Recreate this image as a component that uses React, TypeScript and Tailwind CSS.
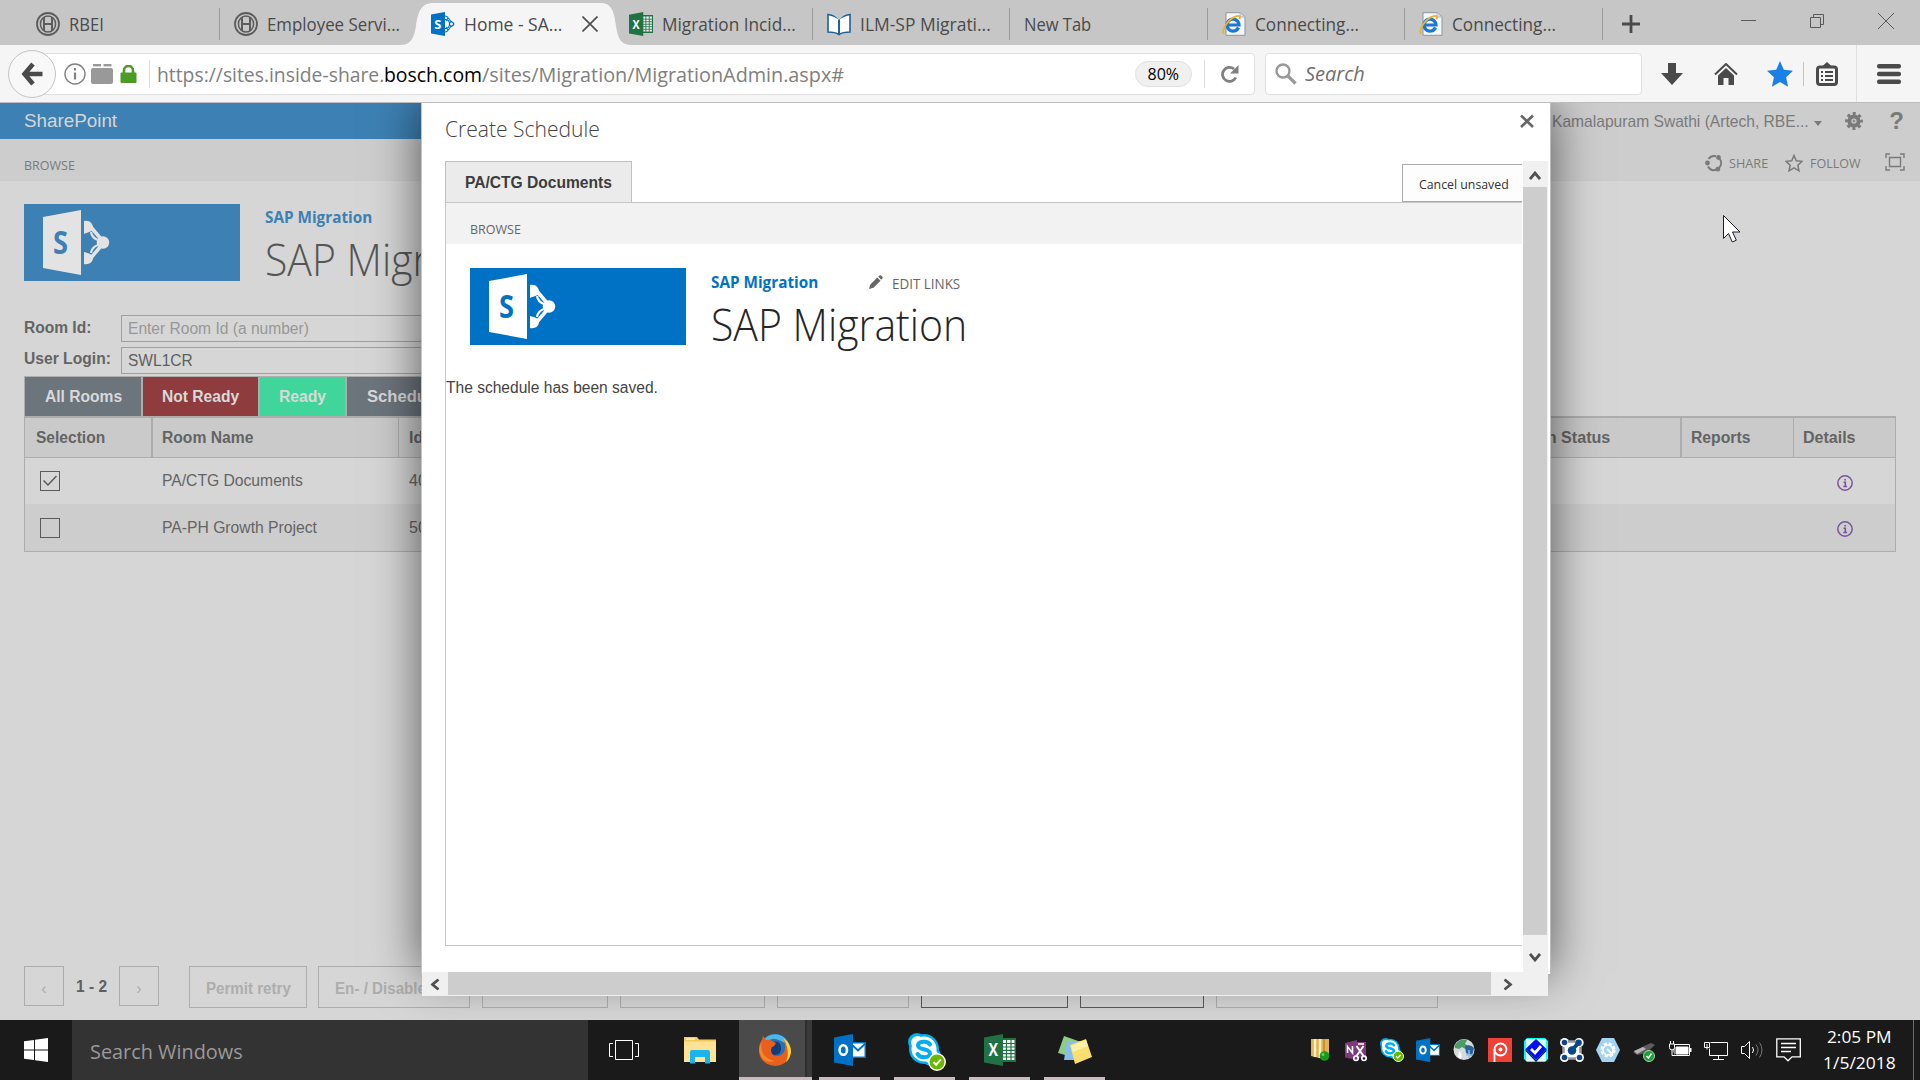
import React, { useLayoutEffect, useRef, useState } from "react";

/* Text run squeezed or stretched horizontally to a given width. */
function Fit({ w, className = "", children }: { w: number; className?: string; children: React.ReactNode }) {
  const ref = useRef<HTMLSpanElement>(null);
  const [k, setK] = useState(1);
  useLayoutEffect(() => {
    if (ref.current && ref.current.offsetWidth) setK(w / ref.current.offsetWidth);
  }, [w]);
  return (
    <span className={"block shrink-0 whitespace-pre " + className} style={{ width: w }}>
      <span ref={ref} className="inline-block origin-left" style={{ transform: `scaleX(${k})` }}>
        {children}
      </span>
    </span>
  );
}

const UI = "font-['Open_Sans','Noto_Sans',sans-serif]";
const ARIAL = "font-['Liberation_Sans',sans-serif]";

function Bosch() {
  return (
    <svg viewBox="0 0 24 24" className="h-6 w-6 shrink-0" fill="none" stroke="#5c5c5c">
      <circle cx="12" cy="12" r="11" strokeWidth="1.8" />
      <ellipse cx="12" cy="12" rx="7.6" ry="8" strokeWidth="1.5" />
      <path d="M8 5v14M16 5v14M8 12h8" strokeWidth="2" />
    </svg>
  );
}
function SharePointTab() {
  return (
    <svg viewBox="0 0 24 24" className="h-6 w-6 shrink-0">
      <g fill="none" stroke="#0072c6" strokeWidth="1.1">
        <path d="M14 4c3 0 3.500 2.500 5.500 5l3.500 3-3.500 3c-2 2.500-2.500 5-5.500 5M14 7.500c3 0 4.500 2 4.500 4.500s-1.500 4.500-4.500 4.500M17 6l-2 3M17 18l-2-3" />
        <circle cx="20.500" cy="12" r="2" fill="#f5f5f5" />
      </g>
      <path d="M0 2.500 14 0v24L0 21.500z" fill="#0072c6" />
      <text x="3.200" y="17" fontSize="13" fontWeight="700" fill="#fff" fontFamily="Open Sans">S</text>
    </svg>
  );
}
function Excel({ className }: { className: string }) {
  return (
    <svg viewBox="0 0 32 32" className={className}>
      <path d="M18 4h14v24H18z" fill="#207245" />
      <path d="M19 6h11.500v20H19z" fill="#fff" />
      <path d="M19 9.500h12M19 13h12M19 16.300h12M19 19.600h12M19 23h12M22.500 5v22M27 5v22" stroke="#207245" strokeWidth="1.200" />
      <path d="M0 3.500 19 0v32L0 28.500z" fill="#207245" />
      <text x="4.500" y="22" fontSize="17" fontWeight="700" fill="#fff" fontFamily="Open Sans" textLength="9.500" lengthAdjust="spacingAndGlyphs">X</text>
    </svg>
  );
}
function Outlook({ className }: { className: string }) {
  return (
    <svg viewBox="0 0 32 32" className={className}>
      <path d="M17 8h15v16H17z" fill="#0072c6" />
      <path d="M18 9.500h12.500v13H18z" fill="#fff" />
      <path d="m17 10 7 6.500 8-7.500" fill="none" stroke="#0072c6" strokeWidth="2" />
      <path d="M0 3.500 19 0v32L0 28.500z" fill="#0072c6" />
      <ellipse cx="9.300" cy="16" rx="3.700" ry="4.800" fill="none" stroke="#fff" strokeWidth="2.600" />
    </svg>
  );
}
function Book() {
  return (
    <svg viewBox="0 0 24 24" className="h-6 w-6 shrink-0">
      <path d="M1 2.500c5 1 8 2 11 4.500 3-2.500 6-3.500 11-4.500v17.500c-5 0-8 .5-11 2.500-3-2-6-2.500-11-2.500z" fill="#fff" stroke="#1f6091" strokeWidth="1.600" />
      <path d="M12 7v15" fill="none" stroke="#1f6091" strokeWidth="2" />
      <path d="M6 1 12 7l6-6" fill="none" stroke="#b9d0e2" strokeWidth="1.300" />
    </svg>
  );
}
function IE() {
  return (
    <svg viewBox="0 0 24 24" className="h-6 w-6 shrink-0">
      <path d="M4 .7h14l5 4v18.600H4z" fill="#f4f6f8" stroke="#8f959b" />
      <path d="M18 .7v4.300h5" fill="#d7dce0" stroke="#a8adb3" strokeWidth=".7" />
      <path d="M16.500 15.500a6 6 0 1 1 .5-2.500H6.500" fill="none" stroke="#1c77d2" strokeWidth="3.200" />
      <path d="M2 22C-1 18 6 7 14 4.300c4-1.300 4.500.7 3.300 3" fill="none" stroke="#eab22e" strokeWidth="1.900" />
    </svg>
  );
}

const tabs = [
  { icon: <Bosch />, label: "RBEI", w: 35, box: "w-[220px] pl-9 border-r" },
  { icon: <Bosch />, label: "Employee Servi...", w: 133, box: "w-[196px] pl-[14px]" },
  { icon: <SharePointTab />, label: "Home - SA...", w: 98, box: "w-[200px] pl-[15px]", active: true },
  { icon: <Excel className="h-6 w-6 shrink-0" />, label: "Migration Incid...", w: 134, box: "w-[197px] pl-[13px] border-r" },
  { icon: <Book />, label: "ILM-SP Migrati...", w: 131, box: "w-[197px] pl-[14px] border-r" },
  { icon: null, label: "New Tab", w: 67, box: "w-[198px] pl-[14px] border-r" },
  { icon: <IE />, label: "Connecting...", w: 104, box: "w-[197px] pl-[14px] border-r" },
  { icon: <IE />, label: "Connecting...", w: 104, box: "w-[198px] pl-[14px] border-r" },
];

function TabStrip() {
  return (
    <div className={"relative flex h-[45px] bg-[#c6c6c6] pt-2 text-[18px] text-[#4a4a4a] " + UI}>
      <svg viewBox="0 0 240 42" className="absolute left-[400px] top-[3px] h-[42px] w-[240px]">
        <path d="M0 42C11 42 14 35 16 23 18 7 22 0 34 0H200C211 0 214 7 216 23 218 36 221 42 232 42z" fill="#f5f5f5" />
      </svg>
      {tabs.map((t, i) => (
        <div key={i} className={"relative flex h-8 shrink-0 items-center gap-[9px] border-[#9b9b9b] " + t.box}>
          {t.icon}
          <Fit w={t.w} className="leading-8">{t.label}</Fit>
          {t.active && (
            <svg viewBox="0 0 16 16" className="ml-[11px] h-4 w-4" stroke="#4d4d4d" strokeWidth="1.600">
              <path d="m.5.500 15 15m0-15-15 15" />
            </svg>
          )}
        </div>
      ))}
      <svg viewBox="0 0 18 18" className="ml-[19px] mt-[7px] h-[18px] w-[18px]" stroke="#4a4a4a" strokeWidth="2.800">
        <path d="M9 0v18M0 9h18" />
      </svg>
      <div className="ml-auto mr-[26px] mt-[5px] flex h-4 items-center gap-[53px]">
        <svg viewBox="0 0 16 16" className="h-4 w-4" stroke="#5a5a5a"><path d="M1 7.500h15" /></svg>
        <svg viewBox="0 0 16 16" className="h-4 w-4" fill="none" stroke="#5a5a5a"><path d="M1.500 4.500h10v10h-10zM4.500 4V1.500h10v10H12" /></svg>
        <svg viewBox="0 0 16 16" className="h-4 w-4" stroke="#5a5a5a"><path d="m0 0 16 16M16 0 0 16" /></svg>
      </div>
    </div>
  );
}

function Toolbar() {
  return (
    <div className={"flex h-[58px] items-center border-b border-[#bdbdbd] bg-[#f5f5f5] " + UI}>
      <div className="relative z-10 ml-2 flex h-12 w-12 shrink-0 items-center justify-center rounded-full border border-[#c4c4c4] bg-[#f8f8f8]">
        <svg viewBox="0 0 24 24" className="h-6 w-6" fill="none" stroke="#4a4a4a">
          <path d="M13 2 4.500 12 13 22M4 12h18.500" strokeWidth="4.600" />
        </svg>
      </div>
      <div className="-ml-[28px] flex h-[42px] w-[1227px] shrink-0 items-center rounded-sm border border-[#e0e0e0] bg-white">
        <svg viewBox="0 0 22 22" className="ml-[35px] h-[22px] w-[22px]" fill="none" stroke="#808080" strokeWidth="1.400">
          <circle cx="11" cy="11" r="10" />
          <path d="M11 9.500v7M11 5v2.500" strokeWidth="2.200" />
        </svg>
        <svg viewBox="0 0 22 20" className="ml-[5px] h-5 w-[22px]" fill="#999">
          <rect x="0" y="4" width="22" height="16" rx="2" />
          <rect x="2" y="0" width="8" height="2.400" /><rect x="12.500" y="0" width="8" height="2.400" />
        </svg>
        <svg viewBox="0 0 17 18" className="ml-[7px] h-[18px] w-[17px]">
          <path d="M4 9V5.500a4.500 4.500 0 0 1 9 0V9" fill="none" stroke="#4b9b24" strokeWidth="2.600" />
          <rect x=".5" y="7.500" width="16" height="10.500" rx="1" fill="#4b9b24" />
        </svg>
        <div className="ml-3 h-7 w-px bg-[#dcdcdc]" />
        <div className="ml-[7px] mt-0.5 flex text-[20px] leading-7 text-[#808080]">
          <Fit w={227}>https://sites.inside-share.</Fit>
          <Fit w={98} className="text-black">bosch.com</Fit>
          <Fit w={362}>/sites/Migration/MigrationAdmin.aspx#</Fit>
        </div>
        <div className="ml-auto flex h-[26px] w-[57px] items-center justify-center rounded-full border border-[#e0e0e0] bg-[#f0f0f0] text-[16px] text-black">
          <Fit w={32} className="leading-6">80%</Fit>
        </div>
        <div className="ml-3 h-7 w-px bg-[#dcdcdc]" />
        <svg viewBox="0 0 18 18" className="ml-4 mr-[15px] h-[18px] w-[18px]">
          <path d="M14.800 12.500A7 7 0 1 1 13 4" fill="none" stroke="#808080" strokeWidth="2.800" />
          <path d="M17.500 0v8.500H9z" fill="#808080" />
        </svg>
      </div>
      <div className="ml-[10px] flex h-[42px] w-[377px] shrink-0 items-center rounded-sm border border-[#e0e0e0] bg-white">
        <svg viewBox="0 0 22 22" className="ml-[9px] h-[22px] w-[22px]" fill="none" stroke="#999">
          <circle cx="8" cy="8" r="6.500" strokeWidth="2.400" />
          <path d="m13 13 7.500 7.500" strokeWidth="3.200" />
        </svg>
        <Fit w={60} className="ml-2 mt-px text-[20px] italic leading-7 text-[#6f6f6f]">Search</Fit>
      </div>
      <svg viewBox="0 0 22 22" className="ml-[19px] h-[22px] w-[22px]" fill="#4a4a4a"><path d="M7 0h8v10h7L11 22 0 10h7z" /></svg>
      <svg viewBox="0 0 24 22" className="ml-[31px] h-[22px] w-6">
        <path d="M1 11.500 12 1l11 10.500" fill="none" stroke="#4a4a4a" strokeWidth="2" />
        <path d="M4 12.500 12 5l8 7.500V22h-5.500v-7h-5v7H4z" fill="#4a4a4a" />
      </svg>
      <svg viewBox="0 0 24 24" className="ml-[29px] h-[26px] w-[26px]" fill="#1a80e8">
        <path d="m12 0 3.500 8 8.500 1-6.400 6 1.900 8.800L12 19.300l-7.500 4.500L6.400 15 0 9l8.500-1z" />
      </svg>
      <div className="ml-[10px] h-6 w-px bg-[#c4c4c4]" />
      <svg viewBox="0 0 22 24" className="ml-[12px] h-6 w-[22px]">
        <path d="M11 0 16 4.500H6z" fill="#4a4a4a" />
        <rect x="1.500" y="5" width="19" height="17.500" rx="2.500" fill="none" stroke="#4a4a4a" strokeWidth="3" />
        <path d="M5 10h2m2 0h8M5 14h2m2 0h8M5 18h2m2 0h8" stroke="#4a4a4a" strokeWidth="2" />
      </svg>
      <div className="ml-[18px] h-full w-px bg-[#dedede]" />
      <svg viewBox="0 0 24 20" className="ml-5 h-5 w-6" fill="#4a4a4a">
        <rect width="24" height="4.600" rx="2" /><rect y="7.700" width="24" height="4.600" rx="2" /><rect y="15.400" width="24" height="4.600" rx="2" />
      </svg>
    </div>
  );
}

function SiteLogo({ box, s }: { box: string; s: string }) {
  return (
    <svg viewBox="0 0 216 77" className={"h-[77px] w-[216px] shrink-0 " + box}>
      <path d="M19 13 57 6v65l-38-7z" fill="currentColor" />
      <text x="29" y="50" fontSize="32" fontWeight="700" className={s} fontFamily="Open Sans" textLength="15" lengthAdjust="spacingAndGlyphs">S</text>
      <path d="M66 22 80 38.500 66 55" fill="none" stroke="currentColor" strokeWidth="3.600" />
      <path d="M67 28q1 6 7 8v5q-6 2-7 8" fill="none" stroke="currentColor" strokeWidth="2.200" />
      <circle cx="79" cy="38.500" r="6.200" fill="currentColor" />
      <path d="M60 17c6-1 9 3 9 7s-5 4-9 6zM60 48c4 1 9 2 9 6s-4 7-9 6z" fill="currentColor" />
    </svg>
  );
}

function Info() {
  return (
    <svg viewBox="0 0 16 16" className="h-4 w-4" fill="none" stroke="#7a559b">
      <circle cx="8" cy="8" r="7.200" strokeWidth="1.500" />
      <path d="M6.500 7.300H8.300V11.300M6.300 11.500h3.800M7.300 4.800h1.700" strokeWidth="1.600" />
    </svg>
  );
}

function Row({ name, id, checked, bg }: { name: string; id: string; checked?: boolean; bg: string }) {
  return (
    <div className={"flex items-center " + bg}>
      <div className="ml-[15px] flex h-5 w-5 items-center justify-center border border-[#5a5a5a]">
        {checked && (
          <svg viewBox="0 0 14 12" className="h-3 w-[14px]" fill="none" stroke="#5a5a5a" strokeWidth="1.500"><path d="m.5 5.500 4.500 4.500L13.500 1" /></svg>
        )}
      </div>
      <Fit w={name.length > 18 ? 155 : 141} className="ml-[102px]">{name}</Fit>
      <span className={name.length > 18 ? "ml-[92px]" : "ml-[106px]"}>{id}</span>
      <div className="ml-auto mr-[42px] mt-[3px]"><Info /></div>
    </div>
  );
}

const filters = [
  { label: "All Rooms", w: 77, box: "w-[117px] bg-[#6c747c]" },
  { label: "Not Ready", w: 77, box: "w-[116px] bg-[#8e3c3d]" },
  { label: "Ready", w: 47, box: "w-[86px] bg-[#40d59b]" },
];

function SitePage() {
  return (
    <div className={"flex h-full flex-col bg-[#d6d6d6] text-[16px] text-[#646464] " + ARIAL}>
      <div className="flex h-9 shrink-0 items-center">
        <div className="flex h-full w-[700px] items-center bg-[#3d80b3] pl-6 pt-px text-[18px] text-[#d6d6d6]">
          <Fit w={93}>SharePoint</Fit>
        </div>
        <div className="flex h-full flex-1 items-center justify-end bg-[#cdcdcd] text-[#7a7a7a]">
          <Fit w={257} className="mt-0.5 text-[17px]">Kamalapuram Swathi (Artech, RBE...</Fit>
          <svg viewBox="0 0 8 5" className="ml-[5px] mt-1 h-[5px] w-2" fill="#7a7a7a"><path d="M0 0h8L4 5z" /></svg>
          <svg viewBox="-9 -9 18 18" className="ml-[23px] h-[18px] w-[18px]" fill="none" stroke="#7a7a7a">
            <circle r="4.600" strokeWidth="4" /><circle r="1" strokeWidth="1" />
            <circle r="7.400" strokeWidth="3" strokeDasharray="3 2.811" strokeDashoffset="1.500" />
          </svg>
          <span className="ml-[26px] mr-[16px] text-[24px] font-bold leading-9">?</span>
        </div>
      </div>
      <div className={"flex h-[42px] shrink-0 items-center border-b border-[#cacaca] bg-[#cdcdcd] pl-6 text-[13px] text-[#7a7a7a] " + UI}>
        <Fit w={51} className="mt-[12px]">BROWSE</Fit>
        <div className="ml-auto mr-[15px] flex items-center pt-[7px]">
          <svg viewBox="-9 -9 18 18" className="h-[18px] w-[18px]" fill="none" stroke="#7a7a7a" strokeWidth="2">
            <path d="M-5.500-4A7 7 0 0 1 2-6.700M5.800-4A7 7 0 0 1 5 5M2 6.800A7 7 0 0 1-6 3.500" />
            <g fill="#7a7a7a" stroke="none"><circle cx="4.500" cy="-5.500" r="2.400" /><circle cx="-6.500" cy="0" r="2.400" /><circle cx="3.800" cy="6.200" r="2.400" /></g>
          </svg>
          <Fit w={39} className="ml-1.5 mt-px">SHARE</Fit>
          <svg viewBox="0 0 18 18" className="ml-[17px] h-[18px] w-[18px]" fill="none" stroke="#7a7a7a" strokeWidth="1.500">
            <path d="m9 1.500 2.300 5.200 5.700.6-4.200 3.900 1.200 5.600L9 13.900l-5 2.900 1.200-5.600L1 7.300l5.700-.6z" />
          </svg>
          <Fit w={51} className="ml-[7px] mt-px">FOLLOW</Fit>
          <svg viewBox="0 0 20 18" className="mb-0.5 ml-6 h-[18px] w-5" fill="none" stroke="#7a7a7a" strokeWidth="1.400">
            <path d="M4.500 4.500h11v9h-11zM1 5V1h4M15 1h4v4M19 13v4h-4M5 17H1v-4" />
          </svg>
        </div>
      </div>

      <div className="flex h-[133px] shrink-0 pl-6 pt-[23px]">
        <SiteLogo box="bg-[#3d80b3] text-[#e3e3e3]" s="fill-[#3d80b3]" />
        <div className={"ml-[25px] " + UI}>
          <Fit w={107} className="mt-[2px] text-[16px] font-bold leading-[22px] text-[#3d80b3]">SAP Migration</Fit>
          <Fit w={256} className="mt-[4px] text-[44px] font-light leading-[54px] text-[#555]">SAP Migration</Fit>
        </div>
      </div>

      <div className="grid shrink-0 grid-cols-[97px_500px] gap-y-[5px] pl-6">
        <Fit w={67} className="font-bold leading-[28px]">Room Id:</Fit>
        <div className="mt-[1px] h-[27px] border border-[#a0a0a0] pl-1.5 leading-[26px] text-[#989898]"><Fit w={181}>Enter Room Id (a number)</Fit></div>
        <Fit w={87} className="font-bold leading-[24px]">User Login:</Fit>
        <div className="h-[27px] border border-[#a0a0a0] pl-1.5 leading-[26px] text-[#5f5f5f]"><Fit w={65}>SWL1CR</Fit></div>
      </div>

      <div className="mx-6 mt-[2px] flex h-10 shrink-0">
        <div className="flex gap-px border border-b-0 border-[#adadad] bg-[#adadad] font-bold text-[#d9d9d9]">
          {filters.map((f) => (
            <div key={f.label} className={"flex items-center justify-center border-r border-[#adadad] " + f.box}><Fit w={f.w}>{f.label}</Fit></div>
          ))}
          <div className="flex w-[130px] items-center bg-[#6c747c] pl-5"><Fit w={84}>Scheduled</Fit></div>
        </div>
      </div>
      <div className="mx-6 grid h-[136px] shrink-0 grid-rows-[40px_46px_1fr] border border-t-2 border-[#adadad]">
        <div className="flex items-center border-b border-[#adadad] bg-[#cacaca] font-bold">
          <div className="flex h-full w-[128px] items-center border-r-2 border-[#adadad] pl-[11px]"><Fit w={69}>Selection</Fit></div>
          <div className="flex h-full w-[246px] items-center border-r border-[#adadad] pl-[9px]"><Fit w={91}>Room Name</Fit></div>
          <div className="flex h-full w-[400px] items-center pl-[10px]"><Fit w={14}>Id</Fit></div>
          <div className="flex h-full flex-1 items-center justify-end border-r-2 border-[#adadad] pr-[70px]"><Fit w={126}>Migration Status</Fit></div>
          <div className="flex h-full w-[112px] items-center border-r border-[#adadad] pl-[9px]"><Fit w={59}>Reports</Fit></div>
          <div className="flex h-full w-[101px] items-center pl-[9px]"><Fit w={52}>Details</Fit></div>
        </div>
        <Row name="PA/CTG Documents" id="4012" checked bg="bg-[#d6d6d6]" />
        <Row name="PA-PH Growth Project" id="5027" bg="bg-[#cdcdcd]" />
      </div>

      <div className="mb-3 mt-auto flex h-[42px] shrink-0 pl-6 text-[#adadad]">
        <div className="flex h-10 w-10 items-center justify-center border border-[#adadad] pt-1.5">‹</div>
        <Fit w={31} className="mx-[12px] font-bold leading-[41px] text-[#5f5f5f]">1 - 2</Fit>
        <div className="flex h-10 w-10 items-center justify-center border border-[#adadad] pt-1.5">›</div>
        <div className="ml-[30px] flex w-[118px] items-center justify-center border border-[#adadad] pt-1"><Fit w={85} className="font-bold">Permit retry</Fit></div>
        <div className="ml-[11px] flex w-[152px] items-center border border-[#adadad] pl-4 pt-1"><Fit w={91} className="font-bold">En- / Disable</Fit></div>
        <div className="ml-3 w-[126px] border border-[#adadad]" />
        <div className="ml-3 w-[145px] border border-[#adadad]" />
        <div className="ml-3 w-[132px] border border-[#adadad]" />
        <div className="ml-3 w-[147px] border border-[#5a5a5a]" />
        <div className="ml-3 w-[124px] border border-[#5a5a5a]" />
        <div className="ml-3 w-[222px] border border-[#adadad]" />
      </div>
    </div>
  );
}

function Chevron({ className }: { className: string }) {
  return (
    <svg viewBox="0 0 12 9" className={"h-[9px] w-3 " + className} fill="none" stroke="#505050" strokeWidth="2.800"><path d="m1 8 5-6 5 6" /></svg>
  );
}

function Dialog() {
  return (
    <div className="absolute left-[421px] top-0 h-[871px] w-[1130px] border-l border-r border-l-[#c6c6c6] border-r-[#bdbdbd] bg-white shadow-[0_0_45px_rgba(0,0,0,0.6)]">
      <div className="relative flex h-[893px] w-[1126px] flex-col">
        <div className={"flex h-[58px] shrink-0 justify-between pl-[23px] " + UI}>
          <Fit w={155} className="mt-[10px] text-[22px] font-light leading-[30px] text-[#444]">Create Schedule</Fit>
          <svg viewBox="0 0 14 14" className="mr-[14px] mt-[11px] h-[14px] w-[14px]" stroke="#666" strokeWidth="2.600"><path d="m1 1.500 12 11.500m0-11.500L1 13" /></svg>
        </div>
        <div className="flex min-h-0 flex-1">
          <div className="flex min-w-0 flex-1 flex-col pb-[26px] pl-[23px] pr-px">
            <div className={"flex h-[41px] shrink-0 items-end justify-between text-[16px] " + ARIAL}>
              <div className="flex h-full w-[187px] items-center border border-b-0 border-[#c0c0c0] bg-[#ebebeb] pl-[19px] pt-[1px] font-bold text-[#3c3c3c]"><Fit w={147}>PA/CTG Documents</Fit></div>
              <div className={"flex h-[38px] w-[120px] items-center border border-r-0 border-[#ababab] bg-[#fdfdfd] pl-4 pt-1 text-[13px] text-[#333] " + UI}><Fit w={90}>Cancel unsaved</Fit></div>
            </div>
            <div className="flex-1 border border-r-0 border-[#c6c6c6]">
              <div className={"flex h-[41px] items-center bg-[#f2f2f2] pl-6 pt-[13px] text-[13px] text-[#666] " + UI}><Fit w={51}>BROWSE</Fit></div>
              <div className="flex pl-6 pt-[24px]">
                <SiteLogo box="bg-[#0072c6] text-white" s="fill-[#0072c6]" />
                <div className={"ml-[25px] " + UI}>
                  <div className="mt-[3px] flex items-center">
                    <Fit w={107} className="text-[16px] font-bold leading-[22px] text-[#0072c6]">SAP Migration</Fit>
                    <svg viewBox="0 0 14 14" className="ml-[51px] h-[14px] w-[14px]" fill="#666"><path d="m0 14 1.300-4.500L8.300 2.500l3.200 3.200-7 7zM9.200 1.600 10.500.400q1-.6 2 .3l.9 1q.7 1-.1 1.800l-1.100 1.200z" /></svg>
                    <Fit w={68} className="ml-[9px] mt-[3px] text-[14px] leading-[19px] text-[#666]">EDIT LINKS</Fit>
                  </div>
                  <Fit w={256} className="mt-[4px] text-[44px] font-light leading-[54px] text-[#262626]">SAP Migration</Fit>
                </div>
              </div>
              <Fit w={212} className={"mt-[25px] text-[16px] leading-6 text-[#444] " + ARIAL}>The schedule has been saved.</Fit>
            </div>
          </div>
          <div className="flex w-[25px] shrink-0 flex-col items-center border-r border-[#f0f0f0] bg-[#f0f0f0]">
            <div className="flex h-[26px] items-center"><Chevron className="mt-0.5" /></div>
            <div className="h-[748px] w-full bg-[#cdcdcd]" />
            <div className="flex flex-1 items-center pt-2"><Chevron className="rotate-180" /></div>
          </div>
        </div>
        <div className="flex h-6 shrink-0 items-center bg-[#f0f0f0]">
          <div className="flex w-[26px] justify-center"><Chevron className="-rotate-90" /></div>
          <div className="mb-px h-[23px] w-[1043px] bg-[#cdcdcd]" />
          <div className="flex w-[34px] justify-center"><Chevron className="rotate-90" /></div>
        </div>
      </div>
    </div>
  );
}

function Skype({ className }: { className: string }) {
  return (
    <svg viewBox="0 0 38 38" className={className}>
      <g fill="#00aff0"><circle cx="16" cy="16" r="15" /><circle cx="9" cy="9" r="9" /><circle cx="23" cy="23" r="10" /></g>
      <g fill="#fff"><circle cx="16" cy="16" r="12.500" /><circle cx="9.500" cy="9.500" r="6.500" /><circle cx="22.500" cy="22.500" r="7.500" /></g>
      <path d="M22 11.500C20 7.500 10 8 10 12.500c0 5 12 2.500 12 8 0 4.500-10 5-12.500.5" fill="none" stroke="#00aff0" strokeWidth="4" strokeLinecap="round" />
      <circle cx="29" cy="29" r="8.200" fill="#6bb700" stroke="#fff" strokeWidth="1.500" />
      <path d="m25.500 29 2.700 2.700 4.500-5" fill="none" stroke="#fff" strokeWidth="2" />
    </svg>
  );
}

const S = "h-6 w-6 shrink-0";
const tray: React.ReactNode[] = [
  <svg viewBox="0 0 24 24" className={S}>
    <path d="M3 1h18v17l-4 3-6-1-8-2z" fill="#e0b455" /><path d="M7 1v18M12 1v19" stroke="#fff0bd" strokeWidth="2.500" /><path d="M16 1v16" stroke="#b98828" strokeWidth="1.500" />
    <circle cx="16.500" cy="18" r="4.800" fill="#189a1c" /><circle cx="15" cy="16.500" r="1.500" fill="#5ed552" />
  </svg>,
  <svg viewBox="0 0 24 24" className={S}>
    <path d="M1 5 13 2v20L1 19.500z" fill="#80397b" /><path d="M13 4h9v16h-9z" fill="#80397b" />
    <path d="M3.500 15V8.500l5 6.500V8" fill="none" stroke="#fff" strokeWidth="1.600" />
    <path d="m12.500 8 7 10m0-10-7 10" stroke="#fff" strokeWidth="2" /><g fill="none" stroke="#fff" strokeWidth="1.700"><circle cx="12" cy="20.300" r="2.200" /><circle cx="20" cy="20.300" r="2.200" /></g>
    <path d="M14 6h6" stroke="#fff" strokeWidth="1.500" />
  </svg>,
  <Skype className={S} />,
  <Outlook className={S} />,
  <svg viewBox="0 0 24 24" className={S}>
    <circle cx="12" cy="11.500" r="10.500" fill="#d6dadb" /><path d="M3 7q5-7 12-5l-2 4 4 2-2 4-5-3-3 2-4-1z" fill="#4f9b65" />
    <path d="M13 8q6-2 9 2l-2 8-6-3z" fill="#28629a" /><path d="M7 13q4 2 2 8l-3-2z" fill="#fff" /><path d="M17 12v8M14 17h6" stroke="#8fc1e8" strokeWidth="1.500" />
  </svg>,
  <svg viewBox="0 0 24 24" className={S}>
    <path d="M0 0h24v24H0z" fill="#ef4136" /><circle cx="12.500" cy="11.500" r="6" fill="none" stroke="#fff" strokeWidth="1.800" /><circle cx="12.500" cy="11.500" r="2" fill="#fff" /><path d="M6.500 11v13" stroke="#fff" strokeWidth="1.800" />
  </svg>,
  <svg viewBox="0 0 24 24" className={S}>
    <path d="M3 0h18l3 3v18l-3 3H3l-3-3V3z" fill="#0ff" /><path d="M2 1h20v22H2z" fill="#fff" opacity=".85" /><path d="m12 1 10.500 10L12 22 1.500 11z" fill="#0010f0" /><path d="m22.500 11-10.500 11L1.500 11v2L12 24l10.500-11z" fill="#001a70" /><path d="m7 11 4 4 6-7" fill="none" stroke="#fff" strokeWidth="2.800" />
  </svg>,
  <svg viewBox="0 0 24 24" className={S}>
    <path d="M3.500 4h17v16h-17z" fill="#fff" />
    <g fill="#fff"><circle cx="4.500" cy="4.500" r="4.500" /><circle cx="19" cy="4.700" r="4.700" /><circle cx="4.500" cy="19.500" r="4.500" /><circle cx="19.500" cy="19.500" r="4.500" /></g>
    <path d="M8 3.500h7M8 20.500h8M3.500 9v6M20.500 9v6" stroke="#9a9a9a" strokeWidth="2.500" />
    <path d="M19 4.500 12 12" stroke="#0a468c" strokeWidth="4" /><g fill="#0a468c"><circle cx="4.500" cy="4.500" r="2.800" /><circle cx="18.500" cy="4.800" r="3.300" /><circle cx="4.500" cy="19.500" r="2.800" /><circle cx="19.500" cy="19.500" r="2.800" /><circle cx="12" cy="12.500" r="4.300" /></g>
  </svg>,
  <svg viewBox="0 0 24 24" className={S}>
    <path d="M6 0h12l6 12-6 12H6L0 12z" fill="#a3d5f3" /><circle cx="12" cy="12" r="6.500" fill="none" stroke="#fff" strokeWidth="2.200" strokeDasharray="3.200 1.900" /><circle cx="12" cy="12" r="5" fill="none" stroke="#fff" strokeWidth="1.500" /><path d="m11 11 6 6" stroke="#fff" strokeWidth="2" />
  </svg>,
  <svg viewBox="0 0 24 24" className={S}>
    <path d="M1 14 12 8l7-3 4 2-9 8-9 2z" fill="#5c5c5c" /><path d="m2 13 9-4 3 2-9 5z" fill="#b5b5b5" /><circle cx="17" cy="18" r="5.500" fill="#17a032" stroke="#cfe8d2" strokeWidth=".8" /><path d="m14.500 18 2 2 3-4.500" fill="none" stroke="#fff" strokeWidth="1.600" />
  </svg>,
  <svg viewBox="0 0 24 24" className={S} fill="none" stroke="#fff">
    <path d="M6 6.500h15.500v11H6z" /><path d="M8 9h12v7H8z" fill="#fff" /><path d="M22.500 10v4" strokeWidth="2" /><path d="M1.500 6v3.500a2 2 0 0 0 5 0V6zM2.500 3v3M5.500 3v3M4 12v5.500h3" fill="#1a1a1a" />
  </svg>,
  <svg viewBox="0 0 24 24" className={S} fill="none" stroke="#fff">
    <path d="M6.500 4.500h17v13h-18v-7M14.500 17.500v4M9 21.500h11M.5 4.500h5v5h-5zM3 6v5.500" />
  </svg>,
  <svg viewBox="0 0 24 24" className={S} fill="none" stroke="#fff">
    <path d="M1.500 8.500h3l5-5v17l-5-5h-3z" /><path d="M12.500 9q2 3 0 6" /><path d="M16 6.500q4 5.500 0 11M19.500 4.500q5 7.500 0 15" stroke="#777" />
  </svg>,
  <svg viewBox="0 0 26 24" className="h-6 w-[26px] shrink-0" fill="none" stroke="#fff">
    <path d="M.8.800h23.500v18H16l-4 4-4-4H.8zM5 5.500h15M5 9.500h15M5 13.500h10" strokeWidth="1.300" />
  </svg>,
];

function AppSlot({ children, bar }: { children: React.ReactNode; bar: string }) {
  return (
    <div className="relative flex h-full w-[75px] items-center justify-center">
      {children}
      <div className={"absolute bottom-0 h-[3px] bg-[#c8bcc0] " + bar} />
    </div>
  );
}

function Taskbar() {
  return (
    <div className={"flex h-[60px] shrink-0 items-center bg-[#1a1a1a] text-white " + UI}>
      <div className="flex w-[72px] justify-center">
        <svg viewBox="0 0 24 24" className="h-6 w-6" fill="#fff"><path d="M0 3.300 10 2v9.500H0zM11 1.800 24 0v11.500H11zM0 12.500h10V22L0 20.700zM11 12.500h13V24l-13-1.800z" /></svg>
      </div>
      <div className="flex h-full w-[516px] items-center bg-[#333] pl-[18px] pt-[3px] text-[20px] text-[#9a9a9a]"><Fit w={153}>Search Windows</Fit></div>
      <div className="flex h-full w-[75px] items-center pl-[21px]">
        <svg viewBox="0 0 30 20" className="h-5 w-[30px]" fill="none" stroke="#fff"><path d="M6.500.500h17v19h-17zM4 3.500H.5v13H4M26 3.500h3.500v13H26" /></svg>
      </div>
      <div className="flex h-full w-[76px] items-center pl-[21px]">
        <svg viewBox="0 0 32 27" className="h-[27px] w-8">
          <path d="M0 0h13l2 2.500h17V25H0z" fill="#f5ca54" /><path d="M0 4.500h32V25H0z" fill="#ffe394" /><path d="M2 2h9" stroke="#fff7da" strokeWidth="1.300" />
          <path d="M6 26.500V15q0-2 2-2h16q2 0 2 2v11.500h-5V20H11v6.500z" fill="#1cb4ef" />
        </svg>
      </div>
      <div className="relative flex h-full w-[73px] items-center bg-[#4a4a4a] pl-[19px]">
        <svg viewBox="0 0 34 34" className="h-[34px] w-[34px]">
          <circle cx="17" cy="16" r="15" fill="#2b6fb5" /><path d="M5 8Q10 0 20 1.500q9 2 11 11l-9-5q-8-4-12 1z" fill="#4fb7e5" />
          <path d="M14 9q8-2 9 5t-6 8q-5 0-5-5z" fill="#123d79" />
          <path d="M25 5q8 5 8 14-2 13-16 14Q3 32 1 19 .5 11 4 7l1-4 3 4q4-1 6 1l4 2q-1 3-4 4l-1 3q0 6 7 6 8-1 7-11 0-4-2-7z" fill="#e8601d" />
          <path d="M25 5q8 5 8 14-1 7-5 10 3-7 1-15-1-5-4-9z" fill="#ffd53e" /><path d="M4 9q-2 8 2 13t11 6Q6 31 2 21q-2-7 2-12z" fill="#f28a24" />
        </svg>
        <div className="absolute right-0 top-0 h-full w-[5px] bg-[#3a3a3a]" />
        <div className="absolute right-[5px] top-0 h-full w-[2px] bg-[#2e2e2e]" />
        <div className="absolute bottom-0 left-0 h-[3px] w-full bg-[#c8bcc0]" />
      </div>
      <AppSlot bar="w-[61px]"><Outlook className="h-8 w-8" /></AppSlot>
      <AppSlot bar="w-[61px]"><Skype className="ml-1 mt-1 h-[38px] w-[38px]" /></AppSlot>
      <AppSlot bar="w-[61px]"><Excel className="h-8 w-8" /></AppSlot>
      <AppSlot bar="w-[61px]">
        <svg viewBox="0 0 34 28" className="h-7 w-[34px]">
          <path d="m6 0 17 6-5 16L0 17z" fill="#8ecb84" /><path d="M9 5h16v19H6z" fill="#86bdee" /><path d="m12 9 16-6 6 18-17 7z" fill="#f8df70" /><path d="m13 10 15-6 2 6-15 6z" fill="#fff0a8" />
        </svg>
      </AppSlot>
      <div className="ml-auto flex items-center gap-3">
        {tray.map((t, i) => <React.Fragment key={i}>{t}</React.Fragment>)}
      </div>
      <div className="ml-[21px] flex flex-col items-center text-[17px] leading-[26px]">
        <Fit w={65}>2:05 PM</Fit>
        <Fit w={73}>1/5/2018</Fit>
      </div>
      <div className="ml-[17px] mr-[6px] h-full w-px bg-[#6a6a6a]" />
    </div>
  );
}

export default function App() {
  return (
    <div className="relative flex h-[1080px] w-[1920px] flex-col overflow-hidden">
      <TabStrip />
      <Toolbar />
      <div className="relative min-h-0 flex-1 overflow-hidden">
        <SitePage />
        <Dialog />
        <svg viewBox="0 0 18 28" className="absolute left-[1723px] top-[112px] h-7 w-[18px]">
          <path d="M.5.500v23l5-5 3.800 8.500 4-1.800L9.500 17h7.500z" fill="#fff" stroke="#1d1d2b" />
        </svg>
      </div>
      <Taskbar />
    </div>
  );
}
